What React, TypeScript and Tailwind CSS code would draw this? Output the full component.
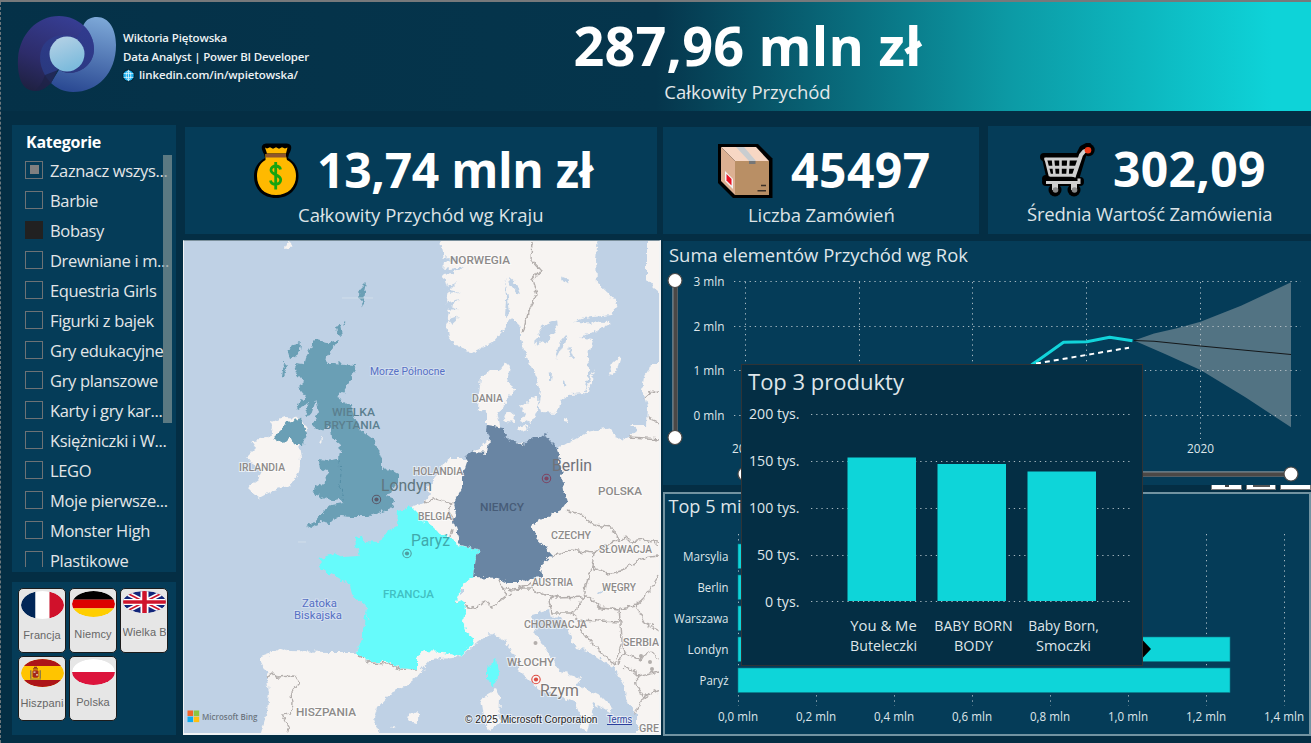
import React from "react";

const CATEGORIES = [
  "Zaznacz wszys...",
  "Barbie",
  "Bobasy",
  "Drewniane i m...",
  "Equestria Girls",
  "Figurki z bajek",
  "Gry edukacyjne",
  "Gry planszowe",
  "Karty i gry kar...",
  "Księżniczki i W...",
  "LEGO",
  "Moje pierwsze...",
  "Monster High",
  "Plastikowe",
];

type TProps = {
  x: number;
  y: number;
  w: number;
  s: number;
  fill?: string;
  font?: string;
  weight?: number;
  halo?: string;
  children: string;
};

/** SVG label with its left edge at x, its baseline at y and a fixed width w. */
function T({ x, y, w, s, fill = "#dfe6ea", font = "Open Sans, sans-serif", weight = 400, halo, children }: TProps) {
  return (
    <text
      x={x}
      y={y}
      fontSize={s}
      fontFamily={font}
      fontWeight={weight}
      fill={fill}
      textLength={w}
      lengthAdjust="spacingAndGlyphs"
      stroke={halo}
      strokeWidth={halo ? 2 : undefined}
      strokeOpacity={0.6}
      paintOrder="stroke"
    >
      {children}
    </text>
  );
}

function Logo() {
  return (
    <svg viewBox="17 15 100 79" className="h-[79px] w-[100px]">
      <defs>
        <linearGradient id="lgA" x1="0.6" y1="0" x2="0.2" y2="1">
          <stop offset="0" stopColor="#363d92" />
          <stop offset="0.6" stopColor="#2d2c6a" />
          <stop offset="1" stopColor="#1f2142" />
        </linearGradient>
        <linearGradient id="lgB" x1="0.6" y1="0" x2="0.4" y2="1">
          <stop offset="0" stopColor="#7ba6d6" />
          <stop offset="1" stopColor="#2b4a93" />
        </linearGradient>
        <linearGradient id="lgC" x1="0" y1="0" x2="0.4" y2="1">
          <stop offset="0" stopColor="#b9d3e6" />
          <stop offset="1" stopColor="#7dbbdc" />
        </linearGradient>
        <linearGradient id="lgD" x1="0" y1="1" x2="0.8" y2="0">
          <stop offset="0" stopColor="#28408a" />
          <stop offset="1" stopColor="#2f3a8d" />
        </linearGradient>
      </defs>
      <path d="M97 17c12 0 19 12 19 28 0 28-18 47-43 47-9 0-17-4-22-9l26-43 7-16c3-5 7-7 13-7z" fill="url(#lgB)" />
      <path d="M59 16c10 0 19 4 25 10 6 6 10 14 10 23 0 13-10 23-24 24-5 0-9-2-12-4l-7 14c-5 5-10 8-16 8-13 0-18-14-17-33 2-24 19-42 41-42z" fill="url(#lgA)" />
      <path d="M84 26c6 6 10 14 10 23 0 13-10 23-24 24-5 0-9-2-12-4l-7 14c-9-9-14-24-9-35 4-9 13-13 22-13 5 0 9 1 13 3z" fill="url(#lgD)" opacity="0.75" />
      <path d="M58 70l-7 13c-5 5-10 8-16 8 6-5 8-11 10-16z" fill="#1c2246" opacity="0.7" />
      <circle cx="67" cy="54" r="17.500" fill="url(#lgC)" />
    </svg>
  );
}

function Globe() {
  return (
    <svg viewBox="0 0 13 13" className="h-[13px] w-[13px]">
      <circle cx="6.5" cy="6.5" r="6.2" fill="#04202f" />
      <circle cx="6.5" cy="6.5" r="5.2" fill="#14aef0" />
      <path d="M1.6 4.6h9.8M1.6 8.4h9.8M6.5 1.3v10.4M6.5 1.3c-3 2-3 8.400 0 10.400M6.500 1.300c3 2 3 8.400 0 10.400" fill="none" stroke="#dff5ff" strokeWidth="0.8" />
    </svg>
  );
}

function MoneyBag() {
  return (
    <svg viewBox="253 143 46 56" className="h-[56px] w-[46px]">
      <path d="M262 146q1-3 5-2.500h18q5-.5 6 2.500 1 3-2 8l-1 4c7 4 10.500 10 10.500 18 0 13-9.500 22-22.500 22s-22-9-22-22c0-8 4-14 11-18l-1-4q-3-5-2-8z" fill="#000" />
      <path d="M265 147.500l2 1 3-1.200 3 1.400 3-1.400 3 1.400 3-1.400 3 1.200 2.500-1-1.500 6h-19z" fill="#ffb900" />
      <path d="M265.500 154h20l1.500 6c6 3 9 9 9 16 0 11-8 19-20 19s-19-8-19-19c0-7 3-13 8.500-16z" fill="#ffb900" />
      <rect x="266" y="153.700" width="20" height="3.800" fill="#8e562e" />
      <path d="M280.500 169.500c-.5-2.500-2.500-3.500-4.800-3.500-2.500 0-4.700 1.400-4.700 4 0 5.500 9.700 4.200 9.700 9.800 0 2.800-2.300 4.400-5 4.400-2.600 0-4.700-1.200-5.200-3.800M275.700 162v27.500" fill="none" stroke="#16a410" strokeWidth="2.800" />
    </svg>
  );
}

function ParcelBox() {
  return (
    <svg viewBox="717 143 56 56" className="h-[56px] w-[56px]">
      <path d="M718 144h40l14.500 14.500V198H733L718 183z" fill="#000" />
      <path d="M721 147h35l13 14h-34z" fill="#f7d7c4" />
      <path d="M721 147l14 14v34l-14-14z" fill="#dcb092" />
      <path d="M735 161h34v34h-34z" fill="#b98f65" />
      <path d="M736 147h8l12 14h-7z" fill="#c9cdd0" />
      <path d="M749 161h6.500v3H749z" fill="#767676" />
      <path d="M725 171l8 8v10l-8-8z" fill="#f3f3f3" />
      <path d="M726.500 174l5 5v6.500l-5-5z" fill="#e81123" />
      <path d="M761 185.500h5M757.500 190.800h8.500" stroke="#3a3028" strokeWidth="1.500" />
    </svg>
  );
}

function Cart() {
  return (
    <svg viewBox="1040 144 56 54" className="h-[54px] w-[56px]">
      <g fill="none" stroke="#000" strokeLinejoin="round" strokeLinecap="round">
        <path d="M1044 158h35l4-8 5-2.500" strokeWidth="8" />
        <path d="M1045 159l4 18h28l6-20z" fill="#000" strokeWidth="6" />
        <path d="M1046 183h34M1046 180l34 2" strokeWidth="8" />
      </g>
      <circle cx="1055" cy="191" r="6.500" fill="#000" />
      <circle cx="1074" cy="191" r="6.500" fill="#000" />
      <circle cx="1088.500" cy="151" r="6.200" fill="#000" />
      <path d="M1044.500 160h35M1047.800 168.300h29M1049.500 176.300h26" stroke="#cfcfcf" strokeWidth="3" />
      <path d="M1045.500 159l4.500 18M1053 160l1.500 16M1060.500 160v16M1068.500 160l-1 16" stroke="#cfcfcf" strokeWidth="2.600" />
      <path d="M1073.500 178l7.500-22 3-3.500 4-1.500" fill="none" stroke="#cfcfcf" strokeWidth="4" />
      <path d="M1046 183.500h33v-4" fill="none" stroke="#cfcfcf" strokeWidth="3" />
      <path d="M1052 184h6v7h-6zM1071 184h6v7h-6z" fill="#cfcfcf" />
      <circle cx="1055.500" cy="191" r="2.800" fill="#8a8a8a" />
      <circle cx="1074.500" cy="191" r="2.800" fill="#8a8a8a" />
      <circle cx="1088" cy="151.200" r="3.300" fill="#f03a17" />
    </svg>
  );
}

function Slicer() {
  return (
    <section className="relative h-[447px] w-[163.500px] shrink-0 overflow-hidden bg-[#053c58]">
      <h2 className="mt-[5px] ml-[14px] text-[16px] leading-6 font-bold tracking-[-0.25px] text-white">Kategorie</h2>
      <ul className="h-[413px] overflow-hidden pt-[1.500px] pl-[13px]">
        {CATEGORIES.map((name, i) => (
          <li key={name} className="flex h-[30px] items-center whitespace-nowrap">
            <span
              className={
                "mb-[2px] flex h-[18px] w-[18px] shrink-0 items-center justify-center " +
                (i === 2 ? "bg-[#212121]" : "border border-[#6d7275]")
              }
            >
              {i === 0 && <span className="h-[9px] w-[9px] bg-[#808080]" />}
            </span>
            <span className="ml-[7px] text-[16.500px] leading-[20px] tracking-[-0.35px] text-[#e3e6e8]">{name}</span>
          </li>
        ))}
      </ul>
      <div className="absolute top-[30px] right-[4px] h-[268px] w-[9px] bg-[#8a9a9a]/65" />
    </section>
  );
}

function Flag({ kind }: { kind: string }) {
  const body: Record<string, React.ReactNode> = {
    fr: (
      <>
        <rect width="14.500" height="30" fill="#012657" />
        <rect x="14.500" width="14" height="30" fill="#fff" />
        <rect x="28.500" width="15" height="30" fill="#d0112b" />
      </>
    ),
    de: (
      <>
        <rect width="43" height="10" fill="#000" />
        <rect y="10" width="43" height="10" fill="#dd0000" />
        <rect y="20" width="43" height="10" fill="#ffce00" />
      </>
    ),
    gb: (
      <>
        <rect width="43" height="30" fill="#12257a" />
        <path d="M0 0l43 30M43 0L0 30" stroke="#fff" strokeWidth="6" />
        <path d="M0 0l43 30M43 0L0 30" stroke="#cf142b" strokeWidth="2" />
        <path d="M21.500 0v30M0 15h43" stroke="#fff" strokeWidth="8" />
        <path d="M21.500 0v30M0 15h43" stroke="#cf142b" strokeWidth="4.500" />
      </>
    ),
    es: (
      <>
        <rect width="43" height="30" fill="#ffc400" />
        <rect width="43" height="7.500" fill="#ad1519" />
        <rect y="22.500" width="43" height="7.500" fill="#ad1519" />
        <rect x="11.500" y="12" width="6" height="8" rx="1.500" fill="#a32a1c" />
        <path d="M9.800 12v9M19.200 12v9" stroke="#7d7053" strokeWidth="1.300" />
        <path d="M12 10.500h5M13 9h3" stroke="#8f3a1c" strokeWidth="1.300" />
        <path d="M12.500 14h2M15 17h2" stroke="#e6d6c4" strokeWidth="1.300" />
        <path d="M9 21.500h11" stroke="#6f6a5c" strokeWidth="0.800" />
      </>
    ),
    pl: (
      <>
        <rect width="43" height="15" fill="#fff" />
        <rect y="15" width="43" height="15" fill="#dc143c" />
      </>
    ),
  };
  return (
    <svg viewBox="0 0 43 30" preserveAspectRatio="none" className="h-full w-full rounded-[50%]">
      {body[kind]}
    </svg>
  );
}

function FlagTile({ kind, label, flagH, gap }: { kind: string; label: string; flagH: string; gap: string }) {
  return (
    <div className="flex h-[65px] w-[48px] shrink-0 flex-col items-center overflow-hidden rounded-[5px] border border-[#1b1b1b] bg-[#e6e6e6] pt-[2px]">
      <div className={"w-[43px] shrink-0 overflow-hidden rounded-[50%] " + flagH}>
        <Flag kind={kind} />
      </div>
      <div
        className={
          "w-[43px] overflow-hidden font-['Liberation_Sans',sans-serif] text-[11px] leading-[14px] tracking-[0.1px] whitespace-nowrap text-[#666] " +
          gap
        }
      >
        {label}
      </div>
    </div>
  );
}

function FlagPanel() {
  return (
    <section className="mt-[10px] flex h-[153px] w-[163.500px] flex-col gap-[3px] bg-[#053c58] pt-[6px] pl-[6px]">
      <div className="flex gap-[3px]">
        <FlagTile kind="fr" label="Francja" flagH="h-[28px]" gap="mt-[9px] text-center" />
        <FlagTile kind="de" label="Niemcy" flagH="h-[26px]" gap="mt-[10px] text-center" />
        <FlagTile kind="gb" label="Wielka B" flagH="h-[22px]" gap="mt-[12px]" />
      </div>
      <div className="flex gap-[3px]">
        <FlagTile kind="es" label="Hiszpania" flagH="h-[28px]" gap="mt-[9px]" />
        <FlagTile kind="pl" label="Polska" flagH="h-[26px]" gap="mt-[10px] text-center" />
      </div>
    </section>
  );
}

const LAND = [
  // Scandinavia
  "M441 236L444 262 443 273 448 290 446 301 449 313 446 325 449 337 457 347 474 352 491 343 500 333 507 325 512 318 521 327 521 340 527 360 534 373 541 390 539 402 541 412 557 413 561 400 572 394 584 393 589 370 588 355 592 340 580 338 591 333 611 323 574 322 584 318 611 315 618 305 607 292 597 283 596 260 598 236z",
  "M647 236L647 280 653 287 661 293 668 236z",
  // Jutland and the Danish islands
  "M507 362L511 366 509 378 507 383 516 390 509 397 504 407 497 413 501 430 487 428 487 413 478 410 479 395 481 377 489 371 500 371z",
  "M504 414l6-3 5 4-1 8-8-1zM519 405l8-3 4-5 6 1 1 10-6 16-10-4 3-6zM517 427l9-2 2 5-8 2z",
  "M564 418l5 2-1 3-4-1zM609 374l3-10 9-8-3 10-5 9zM585 393l4-12 5-12-2 12-4 12z",
  // Continental Europe
  "M411 507L424 502 430 494 427 487 435 478 441 470 446 460 451 458 465 458 490 440 557 448 564 445 587 432 611 427 614 437 622 440 629 437 637 430 631 425 646 425 647 407 642 390 644 377 652 364 670 364 670 740 637 740 637 715 626 698 624 685 614 668 591 652 576 648 567 628 561 617 551 618 549 610 532 615 534 628 547 652 561 672 581 678 577 685 601 697 612 708 610 712 594 703 591 715 587 732 581 728 581 715 576 703 557 695 540 690 531 682 519 670 512 652 504 640 491 633 481 640 474 645 461 657 430 660 417 677 404 687 391 693 377 708 374 718 381 740 259 740 267 712 269 692 266 672 261 663 261 657 275 652 281 648 290 651 327 652 357 652 380 600 400 540z",
  // Sardinia, Balearics
  "M496 690l4 8-1 24-10 8-5-12-3-20zM408 717l8-5 4 3-4 7-5-1zM392 728l4-1-1 3z",
  // Ireland
  "M284 417L271 422 273 428 268 438 251 440 256 448 247 457 254 466 262 472 258 480 247 488 251 492 259 498 274 490 291 485 299 473 301 457 299 445 307 430 300 418z",
  "M319 442l3-5-1 7zM284 245l7-3 1 4-6 3z",
].join("");

const UK = [
  "M314 340L328 342 339 339 336 345 327 357 326 363 334 363 356 365 351 380 344 392 336 398 342 400 351 405 354 417 361 430 374 440 379 452 382 460 382 470 391 469 398 473 398 482 387 497 395 500 393 507 384 511 367 517 351 517 341 516 336 518 330 524 321 522 312 528 306 527 312 523 324 510 331 505 342 503 339 499 331 501 322 498 319 495 312 492 314 488 327 480 326 472 320 470 319 460 327 461 339 458 341 445 332 437 331 427 321 430 312 425 319 412 316 400 311 415 305 416 309 403 299 408 297 403 307 397 299 387 304 382 296 372 294 364 304 365 306 357 311 348z",
  "M300 343l-1 7-7 10-3-1 1-5-3-3zM284 363l3 1-3 12-2 1zM335 326l5-1 2 10-4-1zM343 322l3 1-2 3zM367 283l-2 9-2 16-2-9-3-1 2-8z",
  "M274 437L281 430 287 422 301 418 303 428 307 433 304 444 294 444 290 437 284 443z",
].join("");

const FRANCE =
  "M397 510L411 507 417 513 424 522 431 525 437 531 449 537 459 545 480 550 476 558 473 577 464 583 455 603 462 600 465 612 463 622 466 632 474 639 472 645 461 657 444 652 424 651 417 657 417 670 401 668 387 662 371 662 359 655 357 652 361 642 364 625 366 605 354 597 351 585 337 577 327 572 319 567 323 562 317 560 334 553 342 557 359 556 354 537 362 536 364 542 379 543 384 533 396 527zM497 658L499 675 493 687 487 678 487 668z";

const GERMANY =
  "M487 425L504 428 504 436 517 443 521 446 534 437 541 437 546 433 549 440 557 448 561 470 564 490 567 503 562 510 547 517 532 525 537 538 552 555 541 565 542 577 530 578 521 582 507 582 499 578 473 577 476 558 480 550 461 545 454 522 456 515 454 502 462 488 462 477 467 462 465 455 474 452 487 453 489 440 486 432z";

const BORDERS = [
  "M532 240l-1 20 9 10-8 10 5 15-9 17-5 21",
  "M644 398l6-5 11-3M647 417l14 6M629 437l32 2",
  "M567 510l14 5 13 10 17 2 8 13 7-3 5 5 13-2 18 4",
  "M552 555l19-5 23 3 7-5 16-8",
  "M594 553l-2 14 15 7 17-4 17-12 18-2M592 567l-6 18-2 12-27 1-23-6-2-10",
  "M584 597l-4 7-9 9-19 0-3-13 10-4M584 593l17 15 18 2 17-5 11-10 12-20",
  "M579 620l42 2 1 21-8 22-23-23-12-14z M571 613l8 7",
  "M619 610l1 12M636 605l8 17 17 10M622 643l2 10 17 8 6-10 14 8M624 653l-6 10",
  "M624 667l12 5 1 13 7 12-10 18M637 677l22-5M644 697l15-7",
  "M499 580l3 8 5 7-15 12-7-5-13 6-8-2M507 595l13-7 12 0M502 588l10 2 20-7",
  "M424 502l13-3 15 4-3 9 10 15M452 527l-2 10M455 603l10 0",
  "M266 678l7-5 3 4 19-1 4 7-8 9 1 12-2 10-7 1 7 12-4 7",
  "M357 652l3 5 11 6 17 1 12 5 17 1",
].join("");

type Label = [string, number, number, number, number, string?];
const GREY = "#8d8a89";
const LABELS: Label[] = [
  ["NORWEGIA", 450, 264, 60, 11],
  ["DANIA", 472, 402, 31, 11],
  ["HOLANDIA", 413, 475, 50, 11],
  ["BELGIA", 418, 520, 34, 11],
  ["POLSKA", 598, 495, 44, 11],
  ["CZECHY", 551, 539, 40, 11],
  ["SŁOWACJA", 599, 553, 53, 11],
  ["AUSTRIA", 532, 586, 41, 11],
  ["WĘGRY", 602, 591, 34, 11],
  ["CHORWACJA", 524, 628, 63, 11],
  ["SERBIA", 623, 646, 36, 11],
  ["WŁOCHY", 507, 666, 47, 11],
  ["HISZPANIA", 296, 716, 60, 11],
  ["IRLANDIA", 239, 471, 46, 11],
  ["GRE", 639, 732, 20, 11],
  ["Rzym", 540, 696, 39, 17, "#7b7877"],
];
const SHADED: Label[] = [
  ["WIELKA", 332, 416, 43, 11, "#5b7f8f"],
  ["BRYTANIA", 324, 429, 56, 11, "#5b7f8f"],
  ["NIEMCY", 480, 511, 44, 11, "#475c78"],
  ["FRANCJA", 383, 598, 51, 11, "#41bfc2"],
  ["Berlin", 552, 471, 40, 17, "#70727a"],
  ["Londyn", 381, 491, 51, 16, "#60767f"],
  ["Paryż", 411, 546, 39, 17, "#40a9ac"],
];

function Capital({ x, y, c }: { x: number; y: number; c: string }) {
  return (
    <g>
      <circle cx={x} cy={y} r="4.200" fill="none" stroke={c} strokeWidth="1.100" />
      <circle cx={x} cy={y} r="2.100" fill={c} />
    </g>
  );
}

function EuropeMap() {
  return (
    <div className="h-[495px] w-[478px] shrink-0 overflow-hidden border-t border-r-2 border-b-2 border-l border-t-[#7b909c] border-r-[#f2f4f5] border-b-[#f2f4f5] border-l-[#f2f4f5] bg-[#bfd1e5]">
      <svg viewBox="184 241 475 492" preserveAspectRatio="none" className="block h-full w-full">
        <defs>
          <filter id="coast" filterUnits="userSpaceOnUse" x="170" y="225" width="510" height="525">
            <feTurbulence type="fractalNoise" baseFrequency="0.16" numOctaves="3" seed="7" />
            <feDisplacementMap in="SourceGraphic" scale="7" xChannelSelector="R" yChannelSelector="G" />
          </filter>
        </defs>
        <rect x="170" y="230" width="510" height="520" fill="#bfd1e5" />
        <g filter="url(#coast)">
          <path d={LAND} fill="#f7f4f2" />
          <g fill="#bfd1e5">
            <path d="M539 329l8-6 9-3 1 8-5 9-14 8-3-4 5-5zM567 334l-3 10-7 14-1-4 4-12zM569 347l4 10-2 1-3-7zM561 277l8 3-1 5-5-4zM509 277l8 7 4 10-4-1-7-9zM549 374l3-1-1 8-2 0zM563 380l3 3-3 4z" />
            <path d="M441 258l12-1 8 4-9-1-11 2zM443 270l22-3-12 6-10 1zM444 288l14-6-8 8 10 2-14 1zM447 302l12-3-9 7 9 3-13 1zM447 320l12-4-9 8zM505 278l3 20 2 16-5 3 1-18z" />
            <path d="M596 594l8-6 1 2-8 5zM460 592l5-4 0 3-5 4z" />
          </g>
          <path d={BORDERS} fill="none" stroke="#b3aeac" strokeWidth="1.400" />
          <path d={UK} fill="#6a9fb5" />
          <path d="M340 460l1 14-1 12 4 12-3 5" fill="none" stroke="#538da5" strokeWidth="1" strokeDasharray="3 2" />
          <path d={FRANCE} fill="#66fbfb" />
          <path d={GERMANY} fill="#6985a3" />
          <path d="M364 605l5 15" stroke="#a9dff0" strokeWidth="1" />
        </g>
        <path d="M342 298h31M298 542h8" stroke="#d7e2ec" strokeWidth="0.800" />
        <g fill="#b3aeac">
          <circle cx="535.500" cy="643" r="2" />
          <circle cx="641" cy="656" r="2" />
          <circle cx="650" cy="662" r="2" />
          <circle cx="652" cy="669" r="2" />
        </g>
        {LABELS.map(([t, x, y, w, s, f]) => (
          <T key={t} x={x} y={y} w={w} s={s} fill={f || GREY} halo="#ffffff" font="Roboto, sans-serif" weight={s < 12 ? 500 : 400}>
            {t}
          </T>
        ))}
        {SHADED.map(([t, x, y, w, s, f]) => (
          <T key={t} x={x} y={y} w={w} s={s} fill={f} font="Roboto, sans-serif" weight={s < 12 ? 500 : 400}>
            {t}
          </T>
        ))}
        <T x={370} y={375} w={75} s={11.5} fill="#5670c4" halo="#dfe8f5" font="Roboto, sans-serif">
          Morze Północne
        </T>
        <T x={302} y={607} w={35} s={11} fill="#5670c4" halo="#dfe8f5" font="Roboto, sans-serif">
          Zatoka
        </T>
        <T x={294} y={619} w={48} s={11} fill="#5670c4" halo="#dfe8f5" font="Roboto, sans-serif">
          Biskajska
        </T>
        <Capital x={376.5} y={499.5} c="#5b5a6b" />
        <Capital x={407} y={553.5} c="#4f9da0" />
        <Capital x={546.5} y={478.5} c="#7e4663" />
        <Capital x={536} y={679.5} c="#dc4a41" />
        <rect x="187.500" y="710.500" width="5.500" height="5.500" fill="#f1652a" />
        <rect x="193.700" y="710.500" width="5.500" height="5.500" fill="#8cc63f" />
        <rect x="187.500" y="716.600" width="5.500" height="5.500" fill="#0fabf0" />
        <rect x="193.700" y="716.600" width="5.500" height="5.500" fill="#fec00f" />
        <T x={202} y={720} w={55.5} s={9.500} fill="#6d7680" weight={600}>
          Microsoft Bing
        </T>
        <T x={465} y={723} w={132.5} s={10.5} fill="#1c1c1c" halo="#ffffff" font="Liberation Sans, sans-serif">
          © 2025 Microsoft Corporation
        </T>
        <T x={607} y={723} w={25} s={10.5} fill="#2a3f9c" halo="#ffffff" font="Liberation Sans, sans-serif">
          Terms
        </T>
        <path d="M607 724.500h25" stroke="#2a3f9c" strokeWidth="1" />
      </svg>
    </div>
  );
}

const DOTS = { stroke: "#c3ced4", strokeWidth: 1, strokeDasharray: "1.3 3.9", opacity: 0.85 };

function RevenueChart() {
  return (
    <section className="h-[244px] bg-[#053c58]">
      <svg viewBox="663 241 648 244" className="block h-[244px] w-[648px]">
        <T x={669} y={262} w={299} s={18}>
          Suma elementów Przychód wg Rok
        </T>
        {[281.5, 326, 370.5, 415].map((y, i) => (
          <g key={y}>
            <T x={693.500} y={y + 4.500} w={31} s={12}>
              {`${3 - i} mln`}
            </T>
            <path d={`M734 ${Math.floor(y) + 0.5}H1301`} {...DOTS} />
          </g>
        ))}
        {[745.5, 859.5, 972.5, 1086.5, 1200.5].map((x) => (
          <path key={x} d={`M${x} 282V439`} {...DOTS} />
        ))}
        <path d="M1134 340.500L1154 333.500 1177 328.300 1200.500 321.700 1241 305.700 1291 282.300V427.300L1245 397 1200.500 370 1165 354z" fill="#c5c5c5" fillOpacity="0.400" />
        <path d="M1134 340.500L1154 341.300 1200.500 346 1291 354.500" fill="none" stroke="#15181a" strokeWidth="1.100" />
        <path d="M1010 384L1032 364.500 1040 359 1063.500 342.300 1086.800 341.700 1109.600 337.300 1132.500 340.700" fill="none" stroke="#12d4da" strokeWidth="3" strokeLinejoin="round" />
        <path d="M1036 363.500L1129 347.700" fill="none" stroke="#fff" strokeWidth="2" strokeDasharray="5 4" />
        <T x={732} y={453} w={27} s={12}>
          2012
        </T>
        <T x={1187} y={453} w={27} s={12}>
          2020
        </T>
        <g>
          <path d="M675 281V438M745 474H1291" stroke="#7c8a92" strokeWidth="5.500" />
          <path d="M675.500 281V438M745 474.500H1291" stroke="#4b4846" strokeWidth="4" />
          {[
            [675, 280.5],
            [675, 437.5],
            [745, 474],
            [1291, 474],
          ].map(([x, y]) => (
            <circle key={`${x}-${y}`} cx={x} cy={y} r="7" fill="#fff" stroke="#4b4846" strokeWidth="1.200" />
          ))}
        </g>
      </svg>
    </section>
  );
}

const CITIES: [string, number, number, number][] = [
  ["Marsylia", 683, 544, 310],
  ["Berlin", 697.5, 575, 330],
  ["Warszawa", 674, 606, 350],
  ["Londyn", 687.5, 637, 492],
  ["Paryż", 699.5, 668, 492],
];

function CitiesChart() {
  return (
    <section className="h-[244px] border-2 border-[#7293a1] bg-[#053c58]">
      <svg viewBox="665 494 644 240" className="block h-[240px] w-[644px] overflow-visible">
        <T x={668.500} y={513} w={73} s={18}>
          Top 5 mi
        </T>
        {[0, 1, 2, 3, 4, 5, 6, 7].map((i) => {
          const x = 738 + i * 78;
          return (
            <g key={i}>
              <path d={`M${x + 0.5} 534V706`} {...DOTS} />
              <T x={x - 20} y={721} w={40} s={12}>
                {`${Math.floor(i / 5)},${(i * 2) % 10} mln`}
              </T>
            </g>
          );
        })}
        {CITIES.map(([name, x, y, w]) => (
          <g key={name}>
            <rect x="738" y={y} width={w} height="24.500" fill="#0ed5d9" stroke="#0a7f8c" strokeWidth="0.600" />
            <T x={x} y={y + 16.500} w={728.500 - x} s={12}>
              {name}
            </T>
          </g>
        ))}
        <path d="M1143 640.500l8 8.500-8 8.500z" fill="#000" />
      </svg>
    </section>
  );
}

const PRODUCTS: { x: number; top: number; lines: [string, number][] }[] = [
  { x: 847.5, top: 457.5, lines: [["You & Me", 66.500], ["Buteleczki", 67]] },
  { x: 937.5, top: 464, lines: [["BABY BORN", 78.500], ["BODY", 39]] },
  { x: 1027.5, top: 471.5, lines: [["Baby Born,", 70.500], ["Smoczki", 55]] },
];

function ProductTooltip() {
  return (
    <div className="absolute top-[362px] left-[741px] h-[302px] w-[402px] border border-[#2f3336] bg-[#042e44]">
      <svg viewBox="742 365 400 300" className="block h-[300px] w-[400px]">
        <T x={748} y={390} w={156} s={21}>
          Top 3 produkty
        </T>
        {([
          ["200 tys.", 414, 749],
          ["150 tys.", 461, 749],
          ["100 tys.", 508, 749],
          ["50 tys.", 555, 757],
          ["0 tys.", 601.500, 765],
        ] as [string, number, number][]).map(([t, y, x]) => (
          <g key={t}>
            <T x={x} y={y + 5} w={799.500 - x} s={14.500}>
              {t}
            </T>
            <path d={`M811 ${Math.floor(y) + 0.5}H1132`} {...DOTS} />
          </g>
        ))}
        {PRODUCTS.map((p) => (
          <g key={p.x}>
            <rect x={p.x} y={p.top} width="68.500" height={601 - p.top} fill="#0ed5d9" />
            {p.lines.map(([t, w], i) => (
              <T key={t} x={p.x + 36 - w / 2} y={631 + i * 20} w={w} s={14.500}>
                {t}
              </T>
            ))}
          </g>
        ))}
      </svg>
    </div>
  );
}

function VisualHeaderButtons() {
  return (
    <div className="flex h-[7px] justify-end gap-[4px]">
      <span className="flex h-[5px] w-[31px] justify-center border border-t-0 border-[#777] bg-white">
        <span className="h-[2px] w-[4px] bg-[#444]" />
      </span>
      <span className="flex h-[5px] w-[30px] justify-center border border-t-0 border-[#777] bg-white">
        <span className="h-[2px] w-[17px] bg-[#555]" />
      </span>
      <span className="h-[5px] w-[31px] border border-t-0 border-[#777] bg-white" />
    </div>
  );
}

export default function App() {
  return (
    <div className="relative flex h-[743px] w-[1311px] flex-col overflow-hidden border-t-2 border-t-[#77797b] bg-[#042e44] font-['Open_Sans',sans-serif] text-white">
      <header className="flex h-[109px] shrink-0 bg-[linear-gradient(90deg,#053148_0%,#05354c_50%,#0c9aa5_77%,#0ed3d8_97%)]">
        <div className="flex w-[389px] pt-[13px] pl-[17px]">
          <Logo />
          <div className="ml-[6px] pt-[14px] text-[11.5px] leading-[18.5px] font-semibold whitespace-nowrap text-[#eef2f4]">
            <p className="tracking-[-0.15px]">Wiktoria Piętowska</p>
            <p className="tracking-[-0.17px]">Data Analyst | Power BI Developer</p>
            <p className="-ml-[1.500px] flex items-center gap-[4.500px] tracking-[-0.1px]">
              <Globe />
              linkedin.com/in/wpietowska/
            </p>
          </div>
        </div>
        <div className="flex w-[717px] flex-col items-center whitespace-nowrap">
          <p className="mt-[9px] text-[54px] leading-[68px] font-bold tracking-[0.2px]">287,96 mln zł</p>
          <p className="mt-px text-[18.500px] leading-[24px] text-[#e3e8ea]">Całkowity Przychód</p>
        </div>
      </header>

      <main className="flex min-h-0 flex-1">
        <aside className="mt-[14px] ml-[12px] flex w-[163px] shrink-0 flex-col">
          <Slicer />
          <FlagPanel />
        </aside>

        <div className="ml-[8px] flex min-w-0 flex-1 flex-col">
          <div className="mt-[15px] flex h-[108px] items-start whitespace-nowrap">
            <section className="mt-[1px] ml-[2px] flex h-[107px] w-[472px] flex-col bg-[#053c58]">
              <div className="mt-[16px] ml-[68px] flex h-[56px] items-center gap-[18px]">
                <MoneyBag />
                <span className="-mt-[2px] text-[48px] leading-[56px] font-bold tracking-[-0.3px]">13,74 mln zł</span>
              </div>
              <p className="ml-[113px] text-[18.500px] leading-[32px] text-[#dde3e6]">Całkowity Przychód wg Kraju</p>
            </section>
            <section className="mt-[1px] ml-[6px] flex h-[107px] w-[316px] flex-col bg-[#053c58]">
              <div className="mt-[16px] ml-[54px] flex h-[56px] items-center gap-[18px]">
                <ParcelBox />
                <span className="-mt-[2px] text-[48px] leading-[56px] font-bold tracking-[0.5px]">45497</span>
              </div>
              <p className="ml-[85px] text-[18.500px] leading-[32px] tracking-[-0.1px] text-[#dde3e6]">Liczba Zamówień</p>
            </section>
            <section className="ml-[9px] flex h-[108px] w-[323px] flex-col bg-[#053c58]">
              <div className="mt-[16px] ml-[52px] flex h-[56px] items-center gap-[17px]">
                <Cart />
                <span className="-mt-[2px] text-[48px] leading-[56px] font-bold tracking-[0.3px]">302,09</span>
              </div>
              <p className="ml-[39px] text-[18.500px] leading-[32px] tracking-[-0.2px] text-[#dde3e6]">
                Średnia Wartość Zamówienia
              </p>
            </section>
          </div>

          <div className="mt-[6px] flex">
            <EuropeMap />
            <div className="mt-[1px] ml-[2px] flex w-[648px] flex-col">
              <RevenueChart />
              <VisualHeaderButtons />
              <CitiesChart />
            </div>
          </div>
        </div>
      </main>

      <ProductTooltip />
      <div className="absolute top-0 left-0 h-[741px] border-l border-dashed border-[#6f787d]" />
    </div>
  );
}
